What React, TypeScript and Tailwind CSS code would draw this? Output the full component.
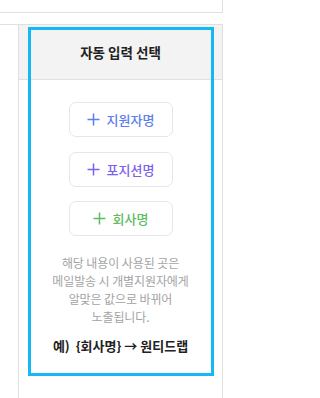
import React from "react";

function Plus({ color }: { color: string }) {
  return (
    <svg width="13" height="13" viewBox="0 0 13 13" fill="none">
      <path d="M6.5 0.5V12.5M0.5 6.5H12.5" stroke={color} strokeWidth="1.5" />
    </svg>
  );
}

function Btn({ label, color, cls }: { label: string; color: string; cls: string }) {
  return (
    <div
      className={`w-[104px] h-[35px] rounded-[7px] border border-[#e6e6e6] bg-white flex items-center justify-center gap-[7px] ${cls}`}
    >
      <Plus color={color} />
      <span className="text-[13px] font-medium leading-none" style={{ color }}>
        {label}
      </span>
    </div>
  );
}

export default function App() {
  return (
    <div
      className="w-[239px] h-[398px] bg-white overflow-hidden"
      style={{ fontFamily: '"Noto Sans CJK KR", "Noto Sans", sans-serif' }}
    >
      <div className="w-[223px] h-[13px] border-b border-r border-[#e0e0e0]" />
      <div className="mt-[11px] w-[223px] h-[380px] border-t border-r border-[#e0e0e0] flex">
        <div className="w-[19px] shrink-0 border-r border-[#e0e0e0]" />
        <div className="flex-1 flex flex-col relative">
          <div className="h-[55px] bg-[#f3f3f3] border-b border-[#e0e0e0] flex items-center justify-center text-[13.5px] font-bold text-[#222]">
            자동 입력 선택
          </div>
          <div className="flex flex-col items-center pt-[22px]">
            <Btn label="지원자명" color="#5b7ef0" cls="" />
            <Btn label="포지션명" color="#7a62ee" cls="mt-[15px]" />
            <Btn label="회사명" color="#5dbd5d" cls="mt-[14px]" />
            <div className="mt-[18px] text-center text-[12px] leading-[18px] text-[#a3a3a3] tracking-[-0.1px]">
              <div>해당 내용이 사용된 곳은</div>
              <div>메일발송 시 개별지원자에게</div>
              <div>알맞은 값으로 바뀌어</div>
              <div>노출됩니다.</div>
            </div>
            <div className="mt-[10px] text-[13px] leading-[20px] font-bold text-[#222] whitespace-pre">
              {"예)  {회사명} → 원티드랩"}
            </div>
          </div>
          <div className="absolute left-[9px] top-[2px] w-[186px] h-[349px] border-[3px] border-[#16b8f3] pointer-events-none" />
        </div>
      </div>
    </div>
  );
}
